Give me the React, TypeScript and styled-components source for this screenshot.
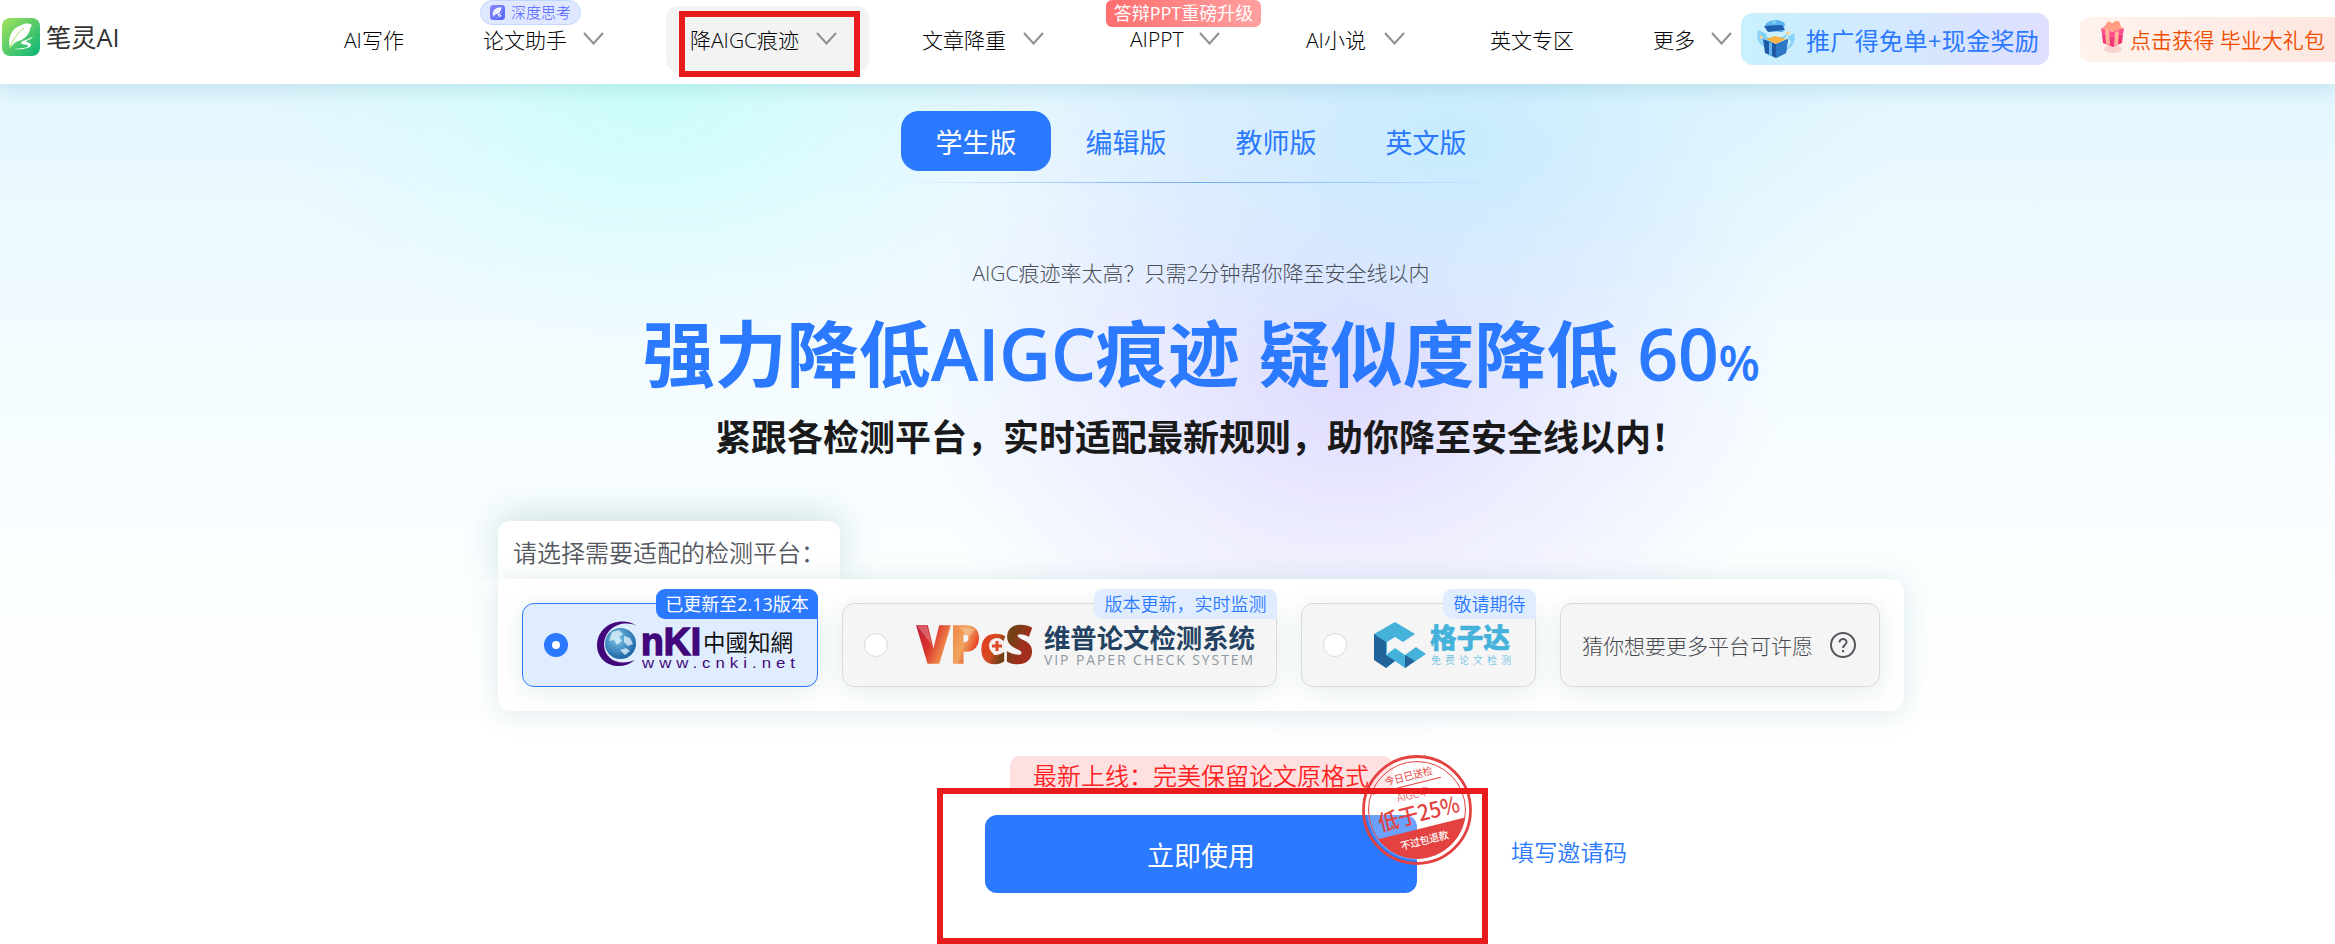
import React from "react";
import styled, { createGlobalStyle } from "styled-components";

const BLUE = "#2b79ff";
const RED = "#e81c1c";
const FONT = '"Open Sans", "Noto Sans CJK SC", sans-serif';
const CJK = '"Noto Sans CJK SC", sans-serif';

const GlobalStyle = createGlobalStyle`
  * { box-sizing: border-box; }
  html, body { margin: 0; padding: 0; overflow: hidden; }
  body { font-family: ${FONT}; font-weight: 300; color: #000; background: #fff; }
  svg { display: block; flex: none; overflow: visible; }
`;

const Page = styled.div`
  position: relative;
  width: 2335px;
  height: 944px;
  overflow: hidden;
  display: flex;
  flex-direction: column;
`;

const Header = styled.header`
  position: relative;
  z-index: 1;
  height: 84px;
  flex: none;
  display: grid;
  grid-template-columns: 344px 139px 207px 232px 208px 176px 184px 163px 88px 339px 255px;
  align-items: center;
  background: #fff;
  box-shadow: 0 2px 20px rgba(20, 130, 130, 0.2);
`;

const Brand = styled.div`
  display: flex;
  align-items: center;
  gap: 6px;
  padding-left: 2px;
  margin-top: -11px;
  font-size: 25.300px;
  font-weight: 400;
  line-height: 38px;
  color: #333;
`;

const NavItem = styled.div<{ $width?: number; $active?: boolean }>`
  position: relative;
  width: ${(p) => (p.$width ? `${p.$width}px` : "auto")};
  height: 66px;
  margin-top: -7px;
  display: flex;
  align-items: center;
  justify-content: space-between;
  font-size: 21px;
  white-space: nowrap;
  ${(p) => p.$active && "background: #f3f3f3; border-radius: 12px; box-shadow: 32px 0 0 #f3f3f3, -24px 0 0 #f3f3f3;"}
`;

const ThinkBadge = styled.span`
  position: absolute;
  left: -3px;
  top: -6px;
  width: 101px;
  height: 25px;
  display: flex;
  align-items: center;
  gap: 6px;
  padding-left: 9px;
  border: 1px solid #c3d6ff;
  border-radius: 13px;
  background: #dfe8ff;
  color: #4f5bff;
  font-size: 15px;
  line-height: 22px;
`;

const UpgradeBadge = styled.span`
  position: absolute;
  left: -24px;
  top: -6px;
  width: 155px;
  height: 27px;
  border-radius: 6px;
  background: linear-gradient(90deg, #ff6e6e, #ffa0a0);
  color: #fff;
  font-size: 18px;
  font-weight: 400;
  line-height: 27px;
  text-align: center;
`;

const Promo = styled.div<{ $warm?: boolean }>`
  display: flex;
  align-items: center;
  white-space: nowrap;
  width: ${(p) => (p.$warm ? 265 : 308)}px;
  height: ${(p) => (p.$warm ? 45 : 52)}px;
  margin-top: -6px;
  padding-left: ${(p) => (p.$warm ? 20 : 15)}px;
  gap: ${(p) => (p.$warm ? 5 : 11)}px;
  border-radius: ${(p) => (p.$warm ? 9 : 12)}px;
  font-size: ${(p) => (p.$warm ? 21 : 24)}px;
  font-weight: ${(p) => (p.$warm ? 350 : 400)};
  letter-spacing: ${(p) => (p.$warm ? 0.05 : 0.35)}px;
  color: ${(p) => (p.$warm ? "#f04c00" : BLUE)};
  background: ${(p) =>
    p.$warm ? "linear-gradient(90deg,#fff3ee,#fde6df)" : "linear-gradient(90deg,#c8f1ff,#dfdfff)"};
`;

const Hero = styled.main`
  flex: 1;
  display: flex;
  flex-direction: column;
  align-items: center;
  padding: 27px 0 0 67px;
  background:
    radial-gradient(ellipse 380px 250px at 650px 10px, rgba(198, 255, 250, 0.85), rgba(205, 255, 251, 0.42) 50%, rgba(215, 255, 253, 0) 100%),
    radial-gradient(ellipse 440px 260px at 1450px 60px, rgba(190, 234, 255, 0.75), rgba(195, 235, 255, 0.35) 50%, rgba(205, 238, 255, 0) 100%),
    radial-gradient(ellipse 440px 370px at 1350px 290px, rgba(214, 206, 255, 0.72), rgba(218, 211, 255, 0.36) 50%, rgba(228, 224, 255, 0) 100%),
    linear-gradient(180deg, #e2f5fe 0, #ecf9ff 120px, #f4fcff 300px, #fbfeff 480px, #fff 660px);
`;

const Tabs = styled.nav`
  display: flex;
  height: 71px;
`;

const Tab = styled.span<{ $active?: boolean }>`
  width: 150px;
  height: 60px;
  border-radius: 18px;
  display: flex;
  align-items: center;
  justify-content: center;
  font-size: 27px;
  font-weight: 400;
  padding-top: 1px;
  color: ${(p) => (p.$active ? "#fff" : BLUE)};
  background: ${(p) => (p.$active ? BLUE : "transparent")};
`;

const Divider = styled.div`
  width: 600px;
  height: 1px;
  background: linear-gradient(90deg, rgba(43, 121, 255, 0), #6faaff 50%, rgba(43, 121, 255, 0));
`;

const Lead = styled.p`
  margin: 75px 0 0;
  font-size: 21px;
  line-height: 30px;
  color: #484e55;
`;

const Title = styled.h1`
  margin: 11px 0 0;
  height: 108px;
  font-size: 72px;
  line-height: 108px;
  font-weight: 700;
  color: ${BLUE};
  white-space: pre;
`;

const Latin = styled.span<{ $size?: number }>`
  font-weight: 600;
  font-size: ${(p) => p.$size ?? 72}px;
  letter-spacing: -0.6px;
`;

const Subtitle = styled.h2`
  margin: 1px 0 0;
  font-size: 36px;
  line-height: 54px;
  font-weight: 700;
  color: #1a1a1a;
  font-family: ${CJK};
`;

const Picker = styled.section`
  width: 1406px;
  margin-top: 59px;
`;

const PickerLabel = styled.div`
  position: relative;
  width: 342px;
  height: 58px;
  padding: 4px 0 0 15px;
  border-radius: 12px 12px 0 0;
  background: #fff;
  box-shadow: 0 -6px 36px rgba(30, 110, 115, 0.2);
  clip-path: inset(-60px -60px 0 -60px);
  font-size: 24px;
  line-height: 54px;
  font-weight: 350;
  color: #56585f;
  font-family: ${CJK};
`;

const Panel = styled.div`
  position: relative;
  height: 132px;
  padding: 24px;
  display: flex;
  gap: 24px;
  border-radius: 0 14px 14px 14px;
  background: #fff;
  box-shadow: 0 2px 28px rgba(30, 110, 115, 0.15);
`;

const Card = styled.div<{ $width: number; $selected?: boolean }>`
  position: relative;
  width: ${(p) => p.$width}px;
  height: 84px;
  display: flex;
  align-items: center;
  padding-left: 21px;
  border: 1px solid ${(p) => (p.$selected ? BLUE : "#d9d9d9")};
  border-radius: 12px;
  background: ${(p) => (p.$selected ? "#e0edff" : "#f5f5f5")};
  box-shadow: 0 4px 26px rgba(30, 110, 115, 0.12);
`;

const CardTag = styled.span<{ $width: number; $solid?: boolean }>`
  position: absolute;
  right: -1px;
  top: -15px;
  width: ${(p) => p.$width}px;
  height: 30px;
  border-radius: 9px 9px 0 9px;
  font-size: 18px;
  line-height: 30px;
  text-align: center;
  white-space: nowrap;
  font-weight: ${(p) => (p.$solid ? 400 : 350)};
  color: ${(p) => (p.$solid ? "#fff" : BLUE)};
  background: ${(p) => (p.$solid ? BLUE : "#e0edff")};
`;

const Radio = styled.span<{ $on?: boolean }>`
  width: 24px;
  height: 24px;
  flex: none;
  border-radius: 50%;
  background: #fff;
  border: ${(p) => (p.$on ? `8px solid ${BLUE}` : "1px solid #d9d9d9")};
`;

const Logo = styled.div<{ $gap: number }>`
  margin-left: ${(p) => p.$gap}px;
`;

const WishText = styled.span`
  font-size: 21px;
  color: #484a50;
  margin-right: 17px;
  white-space: nowrap;
`;

const Actions = styled.div`
  position: relative;
  margin-top: 45px;
  width: 1406px;
  display: grid;
  grid-template-columns: 1fr 432px 1fr;
  justify-items: center;
`;

const Ribbon = styled.div`
  grid-column: 1 / 4;
  width: 383px;
  height: 36px;
  margin-bottom: 23px;
  border-radius: 10px 10px 0 0;
  background: #ffe0e1;
  color: #ff1f1f;
  font-size: 24px;
  font-weight: 350;
  line-height: 39px;
  text-align: center;
`;

const UseButton = styled.button`
  grid-column: 2;
  position: relative;
  width: 432px;
  height: 78px;
  padding: 0;
  border: 0;
  border-radius: 12px;
  background: ${BLUE};
  color: #fff;
  font: 400 27px ${FONT};
`;

const InviteLink = styled.span`
  grid-column: 3;
  justify-self: start;
  margin-left: 94px;
  font-size: 23.200px;
  font-weight: 350;
  line-height: 74px;
  color: ${BLUE};
`;

const StampBox = styled.span`
  position: absolute;
  left: 376px;
  top: -61px;
`;

const Highlight = styled.div<{ $x: number; $y: number; $w: number; $h: number }>`
  position: absolute;
  z-index: 2;
  left: ${(p) => p.$x}px;
  top: ${(p) => p.$y}px;
  width: ${(p) => p.$w}px;
  height: ${(p) => p.$h}px;
  border: 6px solid ${RED};
`;

const Chevron = () => (
  <svg width="21" height="13" viewBox="0 0 21 13" fill="none" stroke="#8f8f8f" strokeWidth="2">
    <path d="M1 1 L10.5 11.5 L20 1" />
  </svg>
);

const Feather = ({ id, from, to, size }: { id: string; from: string; to: string; size: number }) => (
  <svg width={size} height={size} viewBox="0 0 38 38">
    <defs>
      <linearGradient id={id} x1="0" y1="0" x2="1" y2="1">
        <stop offset="0" stopColor={from} />
        <stop offset="1" stopColor={to} />
      </linearGradient>
    </defs>
    <rect width="38" height="38" rx="8" fill={`url(#${id})`} />
    <path d="M8 30C5 20 10 9 20 7c3-2 7-2 10 0-1 2-2 3-2 4-1 6-6 11-14 13-3 2-4 4-6 6z" fill="#fff" />
    <path d="M8 30C10 23 15 15 22 10" stroke={from} strokeWidth="1" fill="none" />
    <path d="M31 18c-3 4-12 4-12 7 0 2 7 1 7 3s-7 2-14 3c8 1 17-1 17-4 0-3-5-2-5-4 3-1 6-2 7-5z" fill="#fff" />
  </svg>
);

const BlueGift = () => (
  <svg width="39" height="38" viewBox="0 0 39 38">
    <path d="M2 10l9 4-3 6 3 9-7-5-3-6zM38 13l-7 4 4 5-6 9 7-5 3-7z" fill="#8bd4f7" />
    <path d="M9 6c2-7 17-8 20-2l-2 8-16-1z" fill="#5eb4ee" />
    <path d="M8 6l18-1 3 5-17 2z" fill="#1f5fae" />
    <path d="M3 9l9 9 15-1 7-5-8 9-15 1z" fill="#73cdf4" />
    <path d="M7 19l13 5 12-5-2 14-10 5-11-5z" fill="#1e59a8" />
    <path d="M20 24v14l10-5 2-14z" fill="#2f78c8" />
    <path d="M10 19l9-3 11 3-10 5z" fill="#f7b345" />
    <path d="M13 22l3 1v13l-3-1z" fill="#63b7ed" />
    <circle cx="32" cy="13" r="1.800" fill="#ffd284" />
    <circle cx="5" cy="17" r="1.500" fill="#ffd284" />
    <circle cx="18" cy="2" r="2" fill="#7bd0f5" />
  </svg>
);

const PinkGift = () => (
  <svg width="25" height="38" viewBox="0 0 25 38">
    <ellipse cx="13" cy="29" rx="9" ry="4" fill="#ee9a9c" opacity=".35" />
    <path d="M6 5c0-4 5-5 6-1 3-5 9-3 8 1l3 4-9 3L2 8z" fill="#ff9d83" />
    <path d="M1 8l12 4 11-4-1 6-10 3-11-3z" fill="#ff4d8e" />
    <path d="M2 14l11 3 10-3-1 9-9 4-10-4z" fill="#f0377c" />
    <path d="M5 9l4 1 1 15-4-1zM15 12l4-1-1 14-4 1z" fill="#ffb199" />
  </svg>
);

const CnkiLogo = () => (
  <svg width="198" height="48" viewBox="0 0 198 48">
    <defs>
      <radialGradient id="globe" cx=".4" cy=".35" r=".7">
        <stop offset="0" stopColor="#7cc3ea" />
        <stop offset="1" stopColor="#175f9f" />
      </radialGradient>
    </defs>
    <path d="M40 5C26-5 1 2 0 24c0 19 22 28 38 15C24 45 7 40 7 23 8 7 25-2 40 5z" fill="#42087b" />
    <circle cx="23.500" cy="22.500" r="15.500" fill="url(#globe)" />
    <path d="M15 11l7-2 4 4-4 3 3 4-5 4-3-5-5 1zM27 15l6 2 3 6-5 2-4-4zM23 29l6-2 4 3-5 4z" fill="#e6f5fb" opacity=".75" />
    <text x="44" y="34" fontFamily="Liberation Sans, sans-serif" fontWeight="700" fontSize="38" stroke="#42087b" strokeWidth="1.500" fill="#42087b" textLength="60" lengthAdjust="spacingAndGlyphs">nKI</text>
    <text x="106" y="30" fontFamily="Noto Sans CJK SC, sans-serif" fontWeight="400" fontSize="23" fill="#111" textLength="90" lengthAdjust="spacingAndGlyphs">中國知網</text>
    <g transform="translate(45 47) scale(1.2 1)">
      <text x="0" y="0" fontFamily="Liberation Sans, sans-serif" fontWeight="400" fontSize="14" fill="#42087b" textLength="127.500">www.cnki.net</text>
    </g>
  </svg>
);

const VipLogo = () => (
  <svg width="338" height="42" viewBox="0 0 338 42">
    <defs>
      <linearGradient id="vp" x1="0" x2="1" y1="0" y2=".25">
        <stop offset="0" stopColor="#b51536" />
        <stop offset=".22" stopColor="#d8322b" />
        <stop offset=".36" stopColor="#f08a4c" />
        <stop offset=".5" stopColor="#f0a45e" />
        <stop offset=".62" stopColor="#e63c22" />
        <stop offset=".75" stopColor="#d54a20" />
        <stop offset=".85" stopColor="#6f4216" />
        <stop offset="1" stopColor="#a02f1d" />
      </linearGradient>
    </defs>
    <g fontFamily="Open Sans, sans-serif" fontWeight="800" fill="url(#vp)" stroke="url(#vp)" strokeWidth="1.500">
      <text x="1" y="39" fontSize="52" textLength="116" lengthAdjust="spacingAndGlyphs">VPcS</text>
    </g>
    <path d="M1 2h10l5 19zM43 3l17 2-8 8z" fill="#fff" opacity=".25" />
    <circle cx="81" cy="22" r="8" fill="#f5f0ed" />
    <path d="M76 22h10M81 17v10" stroke="#df4b28" strokeWidth="3" />
    <text x="128" y="24" fontFamily="Noto Sans CJK SC, sans-serif" fontWeight="700" fontSize="26.500" fill="#234262" textLength="211" lengthAdjust="spacingAndGlyphs">维普论文检测系统</text>
    <text x="128" y="41" fontFamily="Open Sans, sans-serif" fontWeight="400" fontSize="14" fill="#8f99a1" textLength="209">VIP PAPER CHECK SYSTEM</text>
  </svg>
);

const GezidaLogo = () => (
  <svg width="137" height="47" viewBox="0 0 137 47">
    <path d="M0 12L21 0l20 12-12 8-8-5-8 5v12L0 24z" fill="#45b2dc" />
    <path d="M0 12l12 8v26L0 38z" fill="#23639c" />
    <path d="M12 33l9-7 10 7 11-8 10 7-21 14-10-7-9 7z" fill="#45b2dc" />
    <path d="M12 33l9 6-9 7zM31 33l10 6-10 7z" fill="#23639c" />
    <text x="56" y="26" fontFamily="Noto Sans CJK SC, sans-serif" fontWeight="900" fontSize="27" fill="#45b2dc" stroke="#45b2dc" strokeWidth=".5" textLength="80" lengthAdjust="spacingAndGlyphs">格子达</text>
    <text x="57" y="42" fontFamily="Noto Sans CJK SC, sans-serif" fontSize="10" fill="#45b2dc" textLength="80">免费论文检测</text>
  </svg>
);

const HelpIcon = () => (
  <svg width="26" height="26" viewBox="0 0 26 26" fill="none" stroke="#56585f" strokeWidth="2">
    <circle cx="13" cy="13" r="12" />
    <path d="M9.500 10.500c0-5 7.500-4.500 7 0-.3 2.500-3.500 2.500-3.500 5.500M13 18v2.200" />
  </svg>
);

const Stamp = () => (
  <svg width="112" height="112" viewBox="0 0 112 112">
    <defs>
      <clipPath id="stampInner">
        <circle cx="56" cy="56" r="48.500" />
      </clipPath>
    </defs>
    <circle cx="56" cy="56" r="50" fill="#fff" opacity=".3" />
    <circle cx="56" cy="56" r="53.500" fill="none" stroke="#e34240" strokeWidth="2.800" />
    <circle cx="56" cy="56" r="48.500" fill="none" stroke="#e34240" strokeWidth="1" />
    <g clipPath="url(#stampInner)">
      <g transform="rotate(-14 56 56)">
        <rect x="0" y="75" width="112" height="45" fill="#e34240" />
      </g>
    </g>
    <g transform="rotate(-14 56 56)" fill="#e34240" fontFamily="Noto Sans CJK SC, sans-serif" textAnchor="middle">
      <text x="56" y="25" fontSize="10.500" fontWeight="400" textLength="49" lengthAdjust="spacingAndGlyphs">今日已送检</text>
      <path d="M17 30h70" stroke="#e34240" strokeWidth="1" />
      <text x="56" y="44" fontSize="11" fontWeight="300" textLength="33" lengthAdjust="spacingAndGlyphs">AIGC率</text>
      <text x="57" y="68" fontSize="22" fontWeight="500" textLength="83" lengthAdjust="spacingAndGlyphs">低于25%</text>
      <text x="56" y="91" fontSize="10.500" fill="#fff" fontWeight="500" textLength="49" lengthAdjust="spacingAndGlyphs">不过包退款</text>
    </g>
  </svg>
);

export default function App() {
  return (
    <Page>
      <GlobalStyle />
      <Header>
        <Brand>
          <Feather id="brandFill" from="#a5e35c" to="#07b377" size={38} />
          笔灵AI
        </Brand>
        <NavItem>AI写作</NavItem>
        <NavItem $width={121}>
          论文助手
          <Chevron />
          <ThinkBadge>
            <Feather id="thinkFill" from="#8e8bff" to="#4d63f5" size={15} />
            深度思考
          </ThinkBadge>
        </NavItem>
        <NavItem $width={147} $active>
          降AIGC痕迹
          <Chevron />
        </NavItem>
        <NavItem $width={122}>
          文章降重
          <Chevron />
        </NavItem>
        <NavItem $width={90}>
          AIPPT
          <Chevron />
          <UpgradeBadge>答辩PPT重磅升级</UpgradeBadge>
        </NavItem>
        <NavItem $width={99}>
          AI小说
          <Chevron />
        </NavItem>
        <NavItem>英文专区</NavItem>
        <NavItem $width={79}>
          更多
          <Chevron />
        </NavItem>
        <Promo>
          <BlueGift />
          推广得免单+现金奖励
        </Promo>
        <Promo $warm>
          <PinkGift />
          点击获得 毕业大礼包
        </Promo>
      </Header>

      <Hero>
        <Tabs>
          <Tab $active>学生版</Tab>
          <Tab>编辑版</Tab>
          <Tab>教师版</Tab>
          <Tab>英文版</Tab>
        </Tabs>
        <Divider />
        <Lead>AIGC痕迹率太高？只需2分钟帮你降至安全线以内</Lead>
        <Title>
          强力降低<Latin>AIGC</Latin>痕迹 疑似度降低 <Latin>60</Latin>
          <Latin $size={48}>%</Latin>
        </Title>
        <Subtitle>紧跟各检测平台，实时适配最新规则，助你降至安全线以内！</Subtitle>

        <Picker>
          <PickerLabel>请选择需要适配的检测平台：</PickerLabel>
          <Panel>
            <Card $width={296} $selected>
              <Radio $on />
              <Logo $gap={29}>
                <CnkiLogo />
              </Logo>
              <CardTag $width={162} $solid>已更新至2.13版本</CardTag>
            </Card>
            <Card $width={435}>
              <Radio />
              <Logo $gap={28}>
                <VipLogo />
              </Logo>
              <CardTag $width={183}>版本更新，实时监测</CardTag>
            </Card>
            <Card $width={235}>
              <Radio />
              <Logo $gap={27}>
                <GezidaLogo />
              </Logo>
              <CardTag $width={93}>敬请期待</CardTag>
            </Card>
            <Card $width={320}>
              <WishText>猜你想要更多平台可许愿</WishText>
              <HelpIcon />
            </Card>
          </Panel>
        </Picker>

        <Actions>
          <Ribbon>最新上线：完美保留论文原格式</Ribbon>
          <UseButton>
            立即使用
            <StampBox>
              <Stamp />
            </StampBox>
          </UseButton>
          <InviteLink>填写邀请码</InviteLink>
        </Actions>
      </Hero>

      <Highlight $x={679} $y={11} $w={181} $h={66} />
      <Highlight $x={937} $y={788} $w={551} $h={156} />
    </Page>
  );
}
